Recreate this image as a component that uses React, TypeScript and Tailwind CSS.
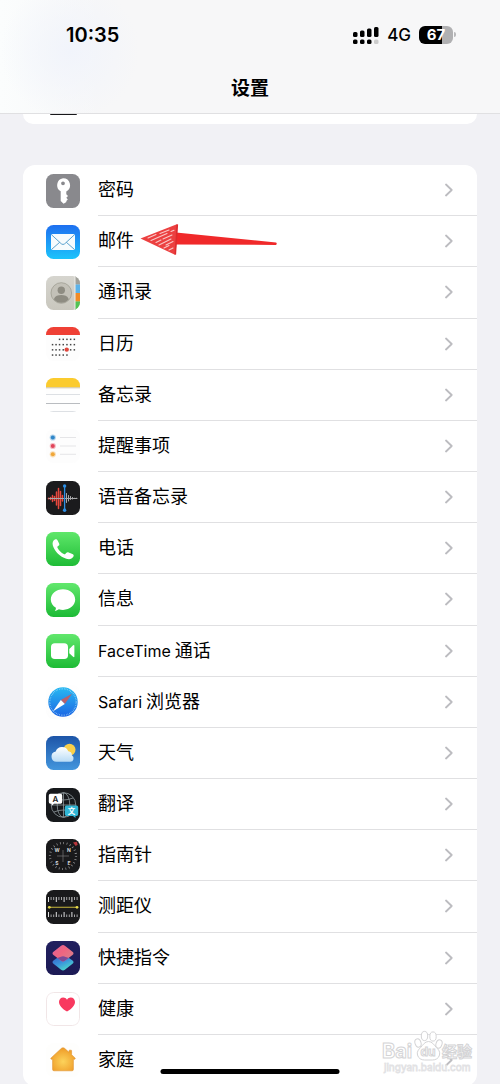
import type { ReactNode } from 'react';

function Tile({ from, to, children }: { from: string; to?: string; children: ReactNode }) {
  const id = `tile${from.slice(1)}${(to ?? from).slice(1)}`;
  return (
    <svg viewBox="0 0 34 34" className="size-[34px] shrink-0" aria-hidden="true">
      <defs>
        <linearGradient id={id} x1="0" y1="0" x2="0" y2="1">
          <stop offset="0" stopColor={from} />
          <stop offset="1" stopColor={to ?? from} />
        </linearGradient>
        <clipPath id="tileClip">
          <rect width="34" height="34" rx="7.5" />
        </clipPath>
      </defs>
      <g clipPath="url(#tileClip)">
        <rect width="34" height="34" fill={`url(#${id})`} />
        {children}
      </g>
    </svg>
  );
}

const KeyIcon = () => (
  <Tile from="#89898d">
    <path
      fillRule="evenodd"
      fill="#fff"
      d="M17 4.2a7 7 0 0 1 3.300 13.200v2.800l1.700 1.700-1.700 1.900 1.500 1.600-1.500 1.500.1 1.100-2.800 1.700-2.900-2.600V17.200A7 7 0 0 1 17 4.200Zm0 3.200a1.900 1.900 0 1 0 0 3.800 1.900 1.900 0 0 0 0-3.800Z"
    />
  </Tile>
);

const MailIcon = () => (
  <Tile from="#1e6ff0" to="#1cc4fb">
    <rect x="5" y="9" width="24" height="16" rx="1.8" fill="#f6fbfd" />
    <path d="m5.6 9.8 9.7 9q1.7 1.4 3.4 0l9.7-9M5.6 24.4l8.2-7.2M28.4 24.4l-8.2-7.2" fill="none" stroke="#5ba3cf" strokeWidth="1" />
  </Tile>
);

const ContactsIcon = () => (
  <Tile from="#d6d5cf" to="#c9c7be">
    <rect x="29" width="5" height="8.5" fill="#a0a09a" />
    <rect x="29" y="8.5" width="5" height="8.5" fill="#5cb3ea" />
    <rect x="29" y="17" width="5" height="8.5" fill="#f08b27" />
    <rect x="29" y="25.5" width="5" height="8.5" fill="#52c254" />
    <path d="M29 0v34" stroke="#eeeeea" strokeWidth="1" />
    <circle cx="15.3" cy="17" r="10.3" fill="#c3c1b8" stroke="#a09e93" strokeWidth=".8" />
    <circle cx="15.3" cy="14.2" r="3.7" fill="#8e8c82" />
    <path d="M7.8 23.2c1.4-3.2 4.2-4.1 7.5-4.1s6.1.9 7.5 4.1c-3.8 4.8-11.2 4.8-15 0Z" fill="#8e8c82" />
  </Tile>
);

const calendarDots: [number, number[]][] = [
  [12.3, [13.5, 17.2, 20.9, 24.6, 28.3]],
  [17.6, [6.5, 10, 13.5, 17.2, 20.9, 24.6, 28.3]],
  [22.8, [6.5, 10, 13.5, 17.2, 24.6, 28.3]],
  [28, [6.5, 10, 13.5, 17.2, 20.9]],
];

const CalendarIcon = () => (
  <Tile from="#fdfdfd">
    <rect width="34" height="8" fill="#ef4035" />
    {calendarDots.map(([y, xs]) =>
      xs.map((x) => <rect key={`${x}-${y}`} x={x - 0.7} y={y - 0.7} width="1.5" height="1.5" fill="#444" />),
    )}
    <circle cx="20.7" cy="22.6" r="2.2" fill="#e0473d" />
  </Tile>
);

const NotesIcon = () => (
  <Tile from="#fefefe">
    <rect width="34" height="9.3" fill="#fbcb2e" />
    <path d="M0 9.8h34" stroke="#cfc3a0" strokeWidth="1" />
    <path d="M0 16.5h34M0 33.5h34" stroke="#dde0e4" strokeWidth="1" />
    <path d="M0 25.5h34" stroke="#b9bcc0" strokeWidth="1" />
  </Tile>
);

const RemindersIcon = () => (
  <Tile from="#fdfdfd">
    {[
      ['#2f86c9', 8.5],
      ['#e0455a', 17],
      ['#f0a73a', 25.3],
    ].map(([c, y]) => (
      <g key={y}>
        <circle cx="6.8" cy={y} r="3.1" fill={c as string} fillOpacity=".35" />
        <circle cx="6.8" cy={y} r="2" fill={c as string} />
      </g>
    ))}
    <path d="M14 8.5h16M14 17h16M14 25.3h16" stroke="#e2e2e4" strokeWidth=".9" />
  </Tile>
);

const VoiceMemosIcon = () => (
  <Tile from="#1b1b1d">
    <path
      d="M2.5 17.3v.5M4.5 16.500v2M6.500 14.500v6M8.500 15.500v4M10.500 11v13M12.500 7.500v20M14.500 10.500v14M16.500 14.500v5.500"
      stroke="#e8483e"
      strokeWidth="1.5"
      strokeLinecap="round"
    />
    <path d="M20.500 12.500v9M22.500 14.500v5.500M24.500 15.500v3M26.500 16.500v1.500M28.500 17.200v.3M30.500 17.200v.3M3 17.500h28" stroke="#a9a9ab" strokeWidth="1" strokeLinecap="round" />
    <path d="M18.6 5v24" stroke="#2d8fe6" strokeWidth="1.3" />
    <circle cx="18.6" cy="5" r="1.7" fill="#2d8fe6" />
    <circle cx="18.6" cy="29.3" r="1.7" fill="#2d8fe6" />
  </Tile>
);

const PhoneIcon = () => (
  <Tile from="#5fe76a" to="#1ebc36">
    <path
      fill="#fff"
      d="M8.900 7.600c1.300-.9 2.200-.3 3 1.300l1.200 2.500c.5 1.100.2 1.800-.7 2.400l-.7.500c-.5.5-.5 1-.1 1.600 1.600 2.700 3.600 4.700 6.200 6.200.6.400 1.200.3 1.700-.3l.7-.8c.7-.8 1.500-.9 2.500-.5l3.700 1.500c1.400.6 1.600 1.600.9 2.800-1.500 2.300-3.900 2.900-7 1.900-6.400-2-11.300-6.900-13.400-13-.8-2.600-.1-4.900 2-6.100Z"
    />
  </Tile>
);

const MessagesIcon = () => (
  <Tile from="#62e86d" to="#1cba35">
    <path
      fill="#fff"
      d="M17 6.3c6.900 0 12.200 4.500 12.200 10.300S23.900 26.900 17 26.900c-1.500 0-2.900-.2-4.100-.6-1.200.9-2.600 1.500-4.100 1.600.8-.9 1.200-2 1.100-3.100-3.100-1.800-5.100-4.800-5.100-8.200C4.800 10.800 10.100 6.300 17 6.300Z"
    />
  </Tile>
);

const FaceTimeIcon = () => (
  <Tile from="#61e76c" to="#1dbb35">
    <rect x="5" y="9.3" width="17" height="15.8" rx="3.8" fill="#fff" />
    <path d="m23.3 15 3.8-3.700q1.300-1 1.300.600v10.300q0 1.600-1.300.600l-3.800-3.600Z" fill="#fff" />
  </Tile>
);

const SafariIcon = () => (
  <Tile from="#fefefe" to="#fdfdfd">
    <defs>
      <linearGradient id="safariSea" x1="0" y1="0" x2="0" y2="1">
        <stop offset="0" stopColor="#27b9f2" />
        <stop offset="1" stopColor="#1c66e4" />
      </linearGradient>
    </defs>
    <circle cx="17" cy="17" r="14.7" fill="url(#safariSea)" />
    <circle cx="17" cy="17" r="13.2" fill="none" stroke="#b4e0fa" strokeWidth="1.2" strokeDasharray=".5 1.2" />
    <path d="m26 8.800-11.200 6.100 4 4.200Z" fill="#b8616c" />
    <path d="m7 26.200 7.800-11.300 4 4.200Z" fill="#fff" />
  </Tile>
);

const WeatherIcon = () => (
  <Tile from="#1d55a8" to="#4396dd">
    <defs>
      <linearGradient id="cloudFill" x1="0" y1="0" x2="0" y2="1">
        <stop offset="0" stopColor="#fff" />
        <stop offset="1" stopColor="#b9dcf6" />
      </linearGradient>
    </defs>
    <circle cx="23.5" cy="13.8" r="6" fill="#f9cf4a" />
    <path d="M10.5 25.8a5.200 5.200 0 0 1-.8-10.300 6.700 6.700 0 0 1 12.600-.3 4 4 0 0 1 3.600 4.100 3.500 3.500 0 0 1-1.600 6.500Z" fill="url(#cloudFill)" />
  </Tile>
);

const TranslateIcon = () => (
  <Tile from="#17191c">
    <g fill="none" stroke="#8f999d" strokeWidth=".8">
      <circle cx="17.5" cy="17" r="12.3" />
      <ellipse cx="17.5" cy="17" rx="6.3" ry="12.3" />
      <path d="M17.5 5v24M5.500 17h24M8 10q9.500 4 19 0M8 24q9.500-4 19 0" />
    </g>
    <path d="M4.500 5.800h10q1.700 0 1.700 1.700v6.500q0 1.700-1.700 1.700H8l-2.300 2v-2H4.500q-1.700 0-1.700-1.700V7.500q0-1.700 1.700-1.700Z" fill="#fff" />
    <path d="M20.500 17.500h10q1.700 0 1.700 1.700v7q0 1.700-1.700 1.700h-1v2.200l-2.500-2.200h-6.500q-1.700 0-1.700-1.700v-7q0-1.700 1.700-1.700Z" fill="#30b5d4" />
    <text x="9.500" y="13.800" textAnchor="middle" fontSize="8" fontWeight="600" fontFamily="Inter, sans-serif" fill="#222">A</text>
    <text x="25.500" y="25.600" textAnchor="middle" fontSize="7.500" fontWeight="700" fontFamily="'Noto Sans CJK SC', sans-serif" fill="#fff">文</text>
  </Tile>
);

const CompassIcon = () => (
  <Tile from="#19191b">
    <circle cx="17" cy="17" r="13" fill="none" stroke="#98989a" strokeWidth="2.2" strokeDasharray=".7 2.7" />
    <path d="M17 11v12M11 17h12" stroke="#77777a" strokeWidth=".7" />
    <g fontSize="5" fontWeight="700" fontFamily="Inter, sans-serif" fill="#d8d8da" textAnchor="middle">
      <text x="11" y="12.500">W</text>
      <text x="23" y="12.500">N</text>
      <text x="11" y="25.500">S</text>
      <text x="23" y="25.500">E</text>
    </g>
    <path d="m27 3.500 3.800-.8.900 3-2 1.300Z" fill="#b8363c" />
  </Tile>
);

const MeasureIcon = () => (
  <Tile from="#19191b">
    {Array.from({ length: 12 }, (_, i) => {
      const x = 2.5 + i * 2.6;
      const long = i % 3 === 0;
      return (
        <path
          key={x}
          d={`M${x} 7v${long ? 5 : 3}M${x} 27v${long ? -5 : -2.5}`}
          stroke={long ? '#e0e0e2' : '#a4a4a6'}
          strokeWidth="1"
        />
      );
    })}
    <path d="M3 17.3h28.5" stroke="#c9b83c" strokeWidth="1.1" />
    <circle cx="3.3" cy="17.3" r="1.4" fill="#e6d94a" />
    <circle cx="31" cy="17.3" r="1.4" fill="#e6d94a" />
  </Tile>
);

const ShortcutsIcon = () => (
  <Tile from="#211f5e" to="#1c1a55">
    <defs>
      <linearGradient id="scTop" x1="0" y1="0" x2="1" y2=".8">
        <stop offset="0" stopColor="#e0609a" />
        <stop offset=".5" stopColor="#ee6580" />
        <stop offset="1" stopColor="#d8808c" />
      </linearGradient>
      <linearGradient id="scBottom" x1="0" y1="0" x2=".6" y2="1">
        <stop offset="0" stopColor="#3558c0" />
        <stop offset=".55" stopColor="#3a90dc" />
        <stop offset="1" stopColor="#4cd8cc" />
      </linearGradient>
    </defs>
    <path d="m18.800 14 7.700 5.400q2 1.700 0 3.400l-7.600 6q-1.900 1.300-3.800 0l-7.600-6q-2-1.700 0-3.400l7.700-5.400q1.800-1.200 3.600 0Z" fill="url(#scBottom)" />
    <path d="m18.900 4.700 7.600 6q2 1.700 0 3.400l-7.600 5.700q-1.900 1.300-3.800 0l-7.600-5.700q-2-1.700 0-3.400l7.600-6q1.900-1.300 3.800 0Z" fill="url(#scTop)" />
    <path d="m11.200 16.900 4.600-1.400q1.200-.4 2.400 0l4.600 1.400-3.900 2.900q-1.900 1.300-3.800 0Z" fill="#7c4a96" />
  </Tile>
);

const HealthIcon = () => (
  <Tile from="#ffffff">
    <rect x=".5" y=".5" width="33" height="33" rx="7" fill="none" stroke="#eddfe1" strokeWidth=".8" />
    <path d="M21 19.500c-4.700-2.900-8-6-8-9.600 0-2.600 1.900-4.500 4.200-4.500 1.600 0 3 .9 3.800 2.300.8-1.400 2.200-2.300 3.800-2.300 2.300 0 4.200 1.900 4.200 4.500 0 3.600-3.300 6.700-8 9.600Z" fill="#f8395f" />
  </Tile>
);

const HomeIcon = () => (
  <Tile from="#fefefd">
    <defs>
      <radialGradient id="houseGlow" cx=".5" cy=".6" r=".55">
        <stop offset="0" stopColor="#fcd35b" />
        <stop offset="1" stopColor="#f09f2b" />
      </radialGradient>
    </defs>
    <path
      d="M15.500 5.300q1.500-1.300 3 0l4.500 4V7.700q0-.5.600-.5h1.400q.6 0 .6.500v4l3.400 3.200q.8 1.100-.5 1.400h-1.100v10.100q0 1.400-1.400 1.400H8q-1.400 0-1.400-1.400V16.300H5.500q-1.300-.3-.4-1.400Z"
      fill="url(#houseGlow)"
      stroke="#df9330"
      strokeWidth=".6"
    />
  </Tile>
);

const items: { id: string; latin?: string; label: string; icon: ReactNode }[] = [
  { id: 'passwords', label: '密码', icon: <KeyIcon /> },
  { id: 'mail', label: '邮件', icon: <MailIcon /> },
  { id: 'contacts', label: '通讯录', icon: <ContactsIcon /> },
  { id: 'calendar', label: '日历', icon: <CalendarIcon /> },
  { id: 'notes', label: '备忘录', icon: <NotesIcon /> },
  { id: 'reminders', label: '提醒事项', icon: <RemindersIcon /> },
  { id: 'voice-memos', label: '语音备忘录', icon: <VoiceMemosIcon /> },
  { id: 'phone', label: '电话', icon: <PhoneIcon /> },
  { id: 'messages', label: '信息', icon: <MessagesIcon /> },
  { id: 'facetime', latin: 'FaceTime', label: '通话', icon: <FaceTimeIcon /> },
  { id: 'safari', latin: 'Safari', label: '浏览器', icon: <SafariIcon /> },
  { id: 'weather', label: '天气', icon: <WeatherIcon /> },
  { id: 'translate', label: '翻译', icon: <TranslateIcon /> },
  { id: 'compass', label: '指南针', icon: <CompassIcon /> },
  { id: 'measure', label: '测距仪', icon: <MeasureIcon /> },
  { id: 'shortcuts', label: '快捷指令', icon: <ShortcutsIcon /> },
  { id: 'health', label: '健康', icon: <HealthIcon /> },
  { id: 'home', label: '家庭', icon: <HomeIcon /> },
];

function Chevron() {
  return (
    <svg viewBox="0 0 8 14" className="h-[14px] w-2 shrink-0" fill="none" stroke="#bcbcc0" strokeWidth="1.8" strokeLinecap="round" strokeLinejoin="round" aria-hidden="true">
      <path d="m1 1.500 5.700 5.500L1 12.500" />
    </svg>
  );
}

function Pointer() {
  return (
    <svg viewBox="0 0 140 34" className="absolute top-[6px] left-[116px] h-[34px] w-[140px]" aria-hidden="true">
      <path d="M37 10.500 137 20.500q1.500 1.200 0 2.400L37 22.500Z" fill="#f0292a" />
      <path d="M1.500 16.500 38.500 2 36.500 33Z" fill="#ec4040" />
      <g stroke="#fff" strokeWidth="1.1" strokeOpacity=".7" strokeLinecap="round">
        <path d="m9 16 8-3.500M12 18.500l16-7M21 11.500l9-3.500M17 20.500l5-2.500M24 17l9-4M20 23l12-6M27 23l7-3.500M25 26l5-2.500M30 28l4-2M32 9.500l3-1.300" />
      </g>
      <path d="m38.300 2.500-2 30" stroke="#dc2b2e" strokeWidth="1.6" />
    </svg>
  );
}

function StatusBar() {
  return (
    <div className="flex h-[69px] items-center justify-between pr-[44px] pl-[66px]">
      <time className="text-[20px] leading-6 font-semibold">10:35</time>
      <div className="flex items-center gap-2">
        <svg viewBox="0 0 26 18" className="h-[18px] w-[26px]" aria-label="信号">
          <rect x="0" y="6" width="4.500" height="5" rx="1.500" />
          <rect x="7" y="4.500" width="4.500" height="6.500" rx="1.500" />
          <rect x="14" y="2.500" width="4.500" height="8.500" rx="1.500" />
          <rect x="21" y="1" width="4.500" height="10" rx="1.500" />
          <rect x="0" y="13.500" width="4.500" height="4.500" rx="1.500" />
          <rect x="7" y="13.500" width="4.500" height="4.500" rx="1.500" />
          <rect x="14" y="13.500" width="4.500" height="4.500" rx="1.500" />
          <rect x="21" y="13.500" width="4.500" height="4.500" rx="1.500" fill="#ccc" />
        </svg>
        <span className="text-[17px] leading-6 font-medium">4G</span>
        <div className="flex items-center gap-px">
          <span className="flex h-[18px] w-[34px] items-center justify-center rounded-md bg-linear-to-r from-black from-67% to-[#b0b0b2] to-67% text-[15px] leading-[18px] font-bold text-white">67</span>
          <span className="h-[5px] w-[2px] rounded-r-full bg-[#b8b8ba]" />
        </div>
      </div>
    </div>
  );
}

function Watermark() {
  return (
    <svg viewBox="0 0 96 46" className="pointer-events-none absolute right-[25px] bottom-[8px] h-[46px] w-[96px]" aria-hidden="true">
      <g fill="#fff" stroke="#d4d4d6" strokeWidth="1">
        <ellipse cx="39" cy="13" rx="3" ry="4.200" transform="rotate(-18 39 13)" />
        <ellipse cx="45.500" cy="6" rx="3.200" ry="4.600" />
        <ellipse cx="54" cy="6.500" rx="3.200" ry="4.600" />
        <ellipse cx="60" cy="14" rx="3" ry="4.200" transform="rotate(18 60 14)" />
        <path d="M49.500 11.500c3.500 0 5.500 3.300 7.700 5.800 2.500 2.500 4.100 4.400 3.300 7.700-.8 3.500-4 5-7 5h-8c-3 0-6.200-1.500-7-5-.8-3.300.8-5.200 3.300-7.700 2.200-2.500 4.200-5.800 7.700-5.800Z" />
        <g fontFamily="Inter, 'Liberation Sans', 'Noto Sans CJK SC', sans-serif" fontWeight="700">
          <text x="3" y="28" fontSize="20">Bai</text>
          <text x="41.500" y="26" fontSize="12">du</text>
          <text x="63" y="27" fontSize="15">经验</text>
        </g>
      </g>
      <text x="5" y="41" fontSize="10" fontFamily="Inter, 'Liberation Sans', sans-serif" fill="#fff" stroke="#e2e2e4" strokeWidth=".8">jingyan.baidu.com</text>
    </svg>
  );
}

export default function App() {
  return (
    <div className="relative flex h-screen flex-col overflow-hidden bg-[#f1f1f5] font-[Inter,'Noto_Sans_CJK_SC',sans-serif] text-black">
      <header className="shrink-0 border-b border-[#e0e0e2] bg-[#f7f7f8] bg-[radial-gradient(circle_at_14%_45%,#f1f4fb_0,transparent_16%),linear-gradient(90deg,#fbfdfd,transparent_20%)]">
        <StatusBar />
        <h1 className="h-[44px] pt-[7px] text-center text-[19px] leading-[26px] font-bold">设置</h1>
      </header>

      <main className="min-h-0 flex-1 overflow-y-auto px-[23px] [scrollbar-width:none]">
        <div className="h-[10px] rounded-b-[10px] bg-white pl-[27px]">
          <div className="h-px w-[27px] rounded-b-full bg-[#17171a]" />
        </div>

        <nav aria-label="设置" className="mt-[41px] rounded-[12px] bg-white">
          <ul className="grid h-[921px] auto-rows-fr">
            {items.map((item, index) => (
              <li key={item.id} className="relative">
                <a href={`#${item.id}`} className="flex h-full items-center gap-[18px] pl-[23px]">
                  {item.icon}
                  <span
                    className={`flex h-full flex-1 items-center justify-between pr-[24px] leading-6 ${
                      index < items.length - 1 ? 'border-b border-[#e0e0e2]' : ''
                    }`}
                  >
                    <span className="flex items-baseline gap-1 text-[18px]">
                      {item.latin && <span className="text-[16px]">{item.latin}</span>}
                      <span>{item.label}</span>
                    </span>
                    <Chevron />
                  </span>
                </a>
                {item.id === 'mail' && <Pointer />}
              </li>
            ))}
          </ul>
        </nav>
      </main>

      <Watermark />
      <div className="absolute bottom-[10px] left-1/2 h-[5px] w-[179px] -translate-x-1/2 rounded-full bg-black" />
    </div>
  );
}
